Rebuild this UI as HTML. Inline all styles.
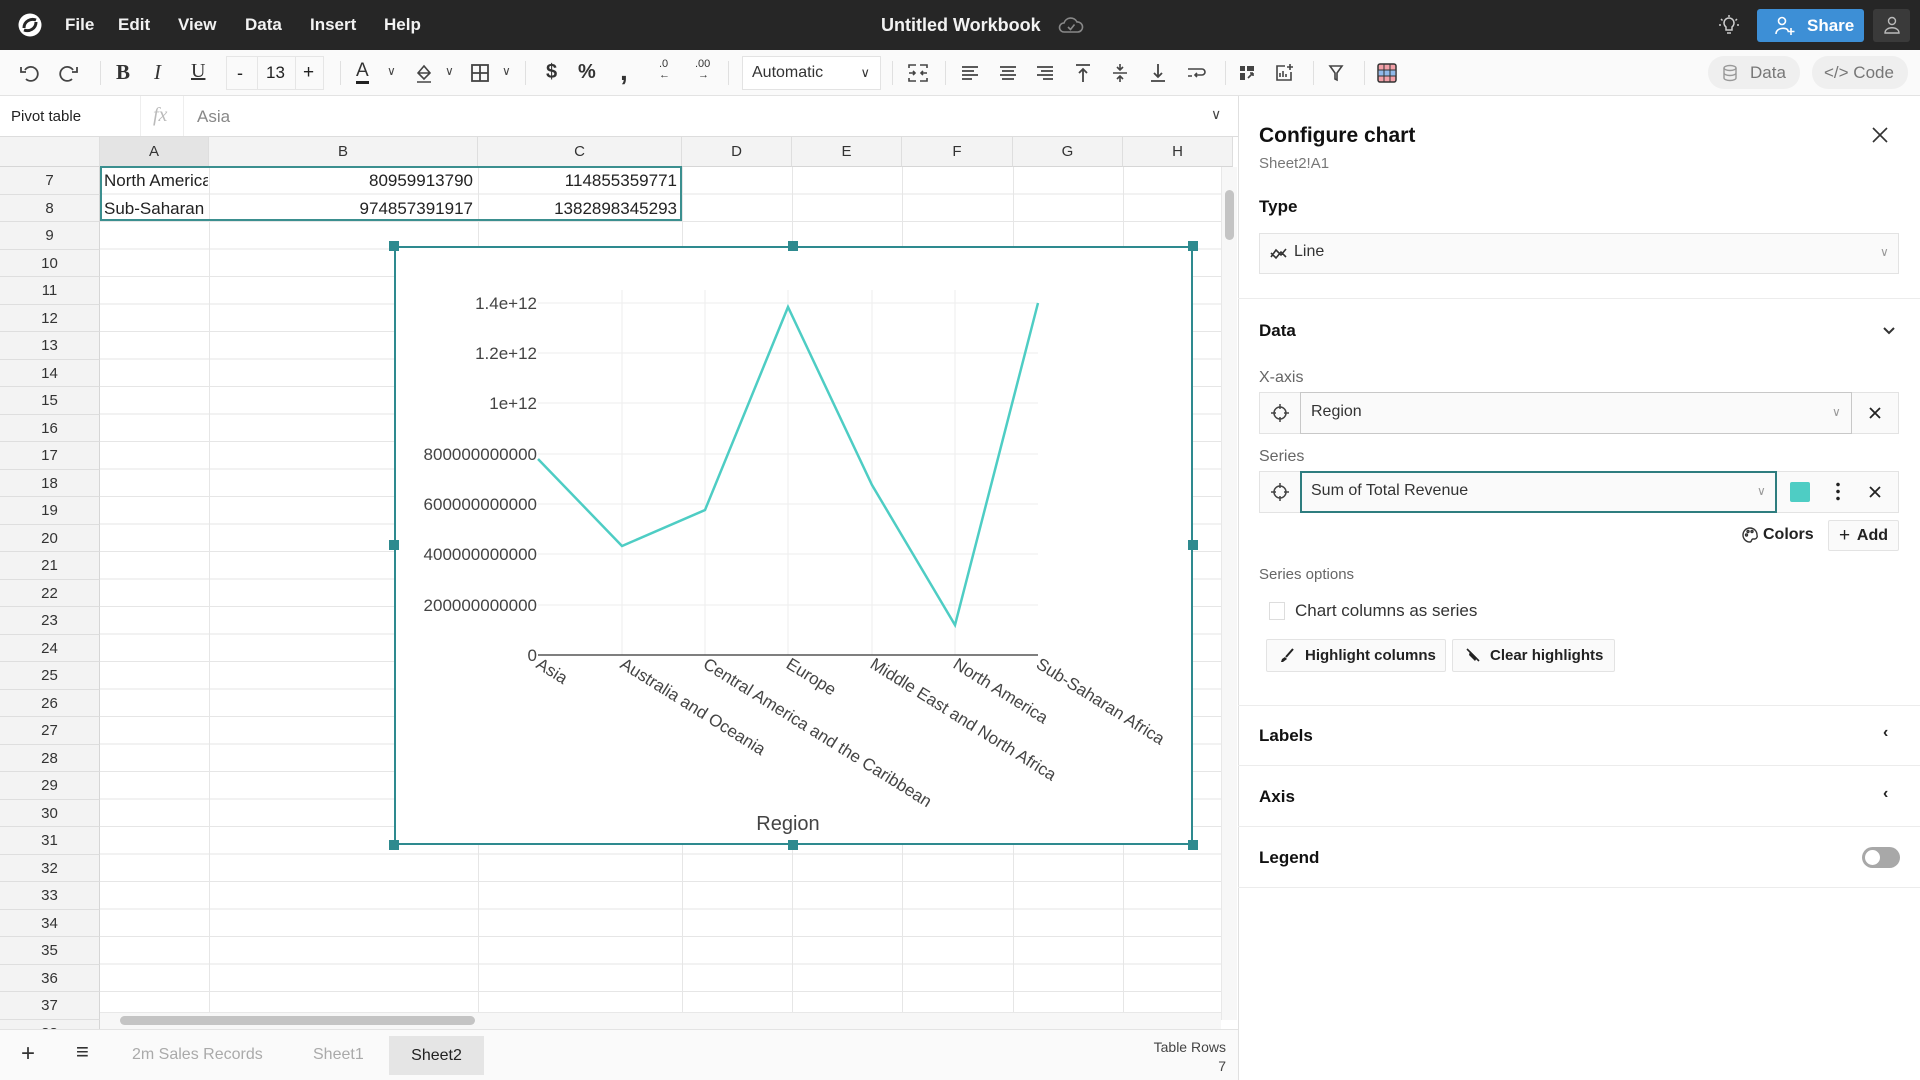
<!DOCTYPE html>
<html><head><meta charset="utf-8">
<style>
*{margin:0;padding:0;box-sizing:border-box}
body{width:1920px;height:1080px;overflow:hidden;background:#fff;font-family:"Liberation Sans",Arial,sans-serif;color:#222;position:relative}
.a{position:absolute}
.top{left:0;top:0;width:1920px;height:50px;background:#262626;color:#fff}
.menu{top:15px;font-size:17px;font-weight:bold;color:#f2f2f2}
.tb{left:0;top:50px;width:1920px;height:46px;background:#fafafa;border-bottom:1px solid #e3e3e3}
.ic{top:11px;width:24px;height:24px}
.sep{top:11px;width:1px;height:24px;background:#e0e0e0}
.fb{left:0;top:96px;width:1238px;height:41px;background:#fff;border-bottom:1px solid #ddd}
.ch{top:137px;height:30px;background:#f3f3f3;border-bottom:1px solid #d6d6d6;border-right:1px solid #dedede;font-size:15px;color:#333;text-align:center;line-height:30px}
.rn{left:0;width:100px;height:27.5px;background:#f3f3f3;border-bottom:1px solid #dedede;border-right:1px solid #d6d6d6;font-size:15px;color:#333;text-align:center;line-height:27.5px}
.vl{top:167px;width:1px;height:853px;background:#e6e6e6}
.hl{left:100px;width:1121px;height:1px;background:#e6e6e6}
.cell{font-size:17px;color:#222;height:27px;line-height:27px}
.pn{left:1238px;top:96px;width:682px;height:984px;background:#fff;border-left:1px solid #e0e0e0}
.h{font-size:17px;font-weight:bold;color:#111}
.lbl{font-size:16px;color:#666}
.psep{left:1238px;width:682px;height:1px;background:#ececec}
.box{border:1px solid #e3e3e3;background:#fafafa}
.btn{border:1px solid #e3e3e3;background:#fafafa;font-size:15px;font-weight:bold;color:#222;border-radius:2px}
</style></head><body>

<!-- top bar -->
<div class="a top">
<svg class="a" style="left:17px;top:12px" width="26" height="26" viewBox="0 0 26 26"><circle cx="13" cy="13" r="11.5" fill="#fff"/><path d="M7 16 C7 9 14 6 19 8 M19 10 C19 17 12 20 7 18" stroke="#262626" stroke-width="3" fill="none"/></svg>
<div class="a menu" style="left:65px">File</div>
<div class="a menu" style="left:118px">Edit</div>
<div class="a menu" style="left:178px">View</div>
<div class="a menu" style="left:245px">Data</div>
<div class="a menu" style="left:310px">Insert</div>
<div class="a menu" style="left:384px">Help</div>
<div class="a menu" style="left:881px;font-size:18px">Untitled Workbook</div>
<svg class="a" style="left:1058px;top:14px" width="26" height="22" viewBox="0 0 26 22"><path d="M6 18 H20 A5 5 0 0 0 19 8 A7 7 0 0 0 6 9 A4.5 4.5 0 0 0 6 18Z" fill="none" stroke="#888" stroke-width="1.6"/><path d="M10 13 l2.5 2.5 l4 -5" fill="none" stroke="#888" stroke-width="1.6"/></svg>
<svg class="a" style="left:1717px;top:13px" width="24" height="24" viewBox="0 0 24 24" fill="none" stroke="#ccc" stroke-width="1.5"><path d="M9 14 A5 5 0 1 1 15 14 V17 H9Z M10 20 H14 M12 2 V4 M4 6 L5.5 7.5 M20 6 L18.5 7.5 M2 12 H4 M20 12 H22"/></svg>
<div class="a" style="left:1757px;top:9px;width:107px;height:33px;background:#3d8fd6;border-radius:3px;color:#fff;font-weight:bold;font-size:17px;line-height:33px;padding-left:50px">Share</div>
<svg class="a" style="left:1774px;top:15px" width="22" height="22" viewBox="0 0 22 22" fill="none" stroke="#fff" stroke-width="1.6"><circle cx="8" cy="6" r="3.5"/><path d="M2 19 C2 12 14 12 14 16 M17 13 V20 M13.5 16.5 H20.5"/></svg>
<div class="a" style="left:1873px;top:9px;width:37px;height:33px;background:#3a3a3a;border-radius:3px"></div>
<svg class="a" style="left:1882px;top:15px" width="20" height="20" viewBox="0 0 20 20" fill="none" stroke="#bbb" stroke-width="1.4"><circle cx="10" cy="6" r="3.5"/><path d="M3 18 C3 11 17 11 17 18Z"/></svg>
</div>

<!-- toolbar -->
<div class="a tb">
<svg class="a ic" style="left:17px" viewBox="0 0 24 24" fill="none" stroke="#444" stroke-width="1.8"><path d="M8 9 A7 7 0 1 1 9 18 M4 6 V11 H9"/></svg>
<svg class="a ic" style="left:57px" viewBox="0 0 24 24" fill="none" stroke="#444" stroke-width="1.8"><path d="M16 9 A7 7 0 1 0 15 18 M20 6 V11 H15"/></svg>
<div class="a sep" style="left:100px"></div>
<div class="a" style="left:116px;top:10px;font-size:21px;font-weight:bold;font-family:'Liberation Serif',serif;color:#333">B</div>
<div class="a" style="left:154px;top:10px;font-size:21px;font-style:italic;font-family:'Liberation Serif',serif;color:#333">I</div>
<div class="a" style="left:191px;top:10px;font-size:20px;text-decoration:underline;font-family:'Liberation Serif',serif;color:#333">U</div>
<div class="a" style="left:226px;top:6px;width:98px;height:34px;border:1px solid #e6e6e6"></div>
<div class="a" style="left:257px;top:6px;width:1px;height:34px;background:#e6e6e6"></div>
<div class="a" style="left:295px;top:6px;width:1px;height:34px;background:#e6e6e6"></div>
<div class="a" style="left:237px;top:13px;font-size:18px">-</div>
<div class="a" style="left:266px;top:13px;font-size:17px">13</div>
<div class="a" style="left:303px;top:12px;font-size:19px">+</div>
<div class="a sep" style="left:340px"></div>
<div class="a" style="left:356px;top:11px;font-size:19px;color:#333;border-bottom:3px solid #222;line-height:20px">A</div>
<div class="a" style="left:387px;top:14px;font-size:12px;color:#444">&#8744;</div>
<svg class="a ic" style="left:412px" viewBox="0 0 24 24" fill="none" stroke="#444" stroke-width="1.6"><path d="M6 12 L12 5 L18 12 L12 18Z M6 12 H18 M5 21 H19"/></svg>
<div class="a" style="left:445px;top:14px;font-size:12px;color:#444">&#8744;</div>
<svg class="a ic" style="left:468px" viewBox="0 0 24 24" fill="none" stroke="#444" stroke-width="1.8"><rect x="4" y="4" width="16" height="16"/><path d="M12 4 V20 M4 12 H20"/></svg>
<div class="a" style="left:502px;top:14px;font-size:12px;color:#444">&#8744;</div>
<div class="a sep" style="left:525px"></div>
<div class="a" style="left:546px;top:11px;font-size:20px;font-weight:bold;color:#333">$</div>
<div class="a" style="left:578px;top:11px;font-size:20px;font-weight:bold;color:#333">%</div>
<div class="a" style="left:620px;top:5px;font-size:28px;font-weight:bold;color:#333">,</div>
<div class="a" style="left:659px;top:9px;font-size:11px;color:#333;line-height:11px">.0<br>&#8592;</div>
<div class="a" style="left:695px;top:9px;font-size:11px;color:#333;line-height:11px">.00<br>&nbsp;&#8594;</div>
<div class="a sep" style="left:728px"></div>
<div class="a" style="left:742px;top:6px;width:139px;height:34px;border:1px solid #e3e3e3;background:#fff;font-size:16px;line-height:32px;padding-left:9px;color:#333">Automatic<span style="position:absolute;right:10px;font-size:13px">&#8744;</span></div>
<div class="a sep" style="left:892px"></div>
<svg class="a ic" style="left:906px" viewBox="0 0 24 24" fill="none" stroke="#444" stroke-width="1.6"><path d="M3 7 V4 H10 M3 17 V20 H10 M21 7 V4 H14 M21 17 V20 H14 M3 12 H9 M7 10 L9 12 L7 14 M21 12 H15 M17 10 L15 12 L17 14"/></svg>
<div class="a sep" style="left:945px"></div>
<svg class="a ic" style="left:958px" viewBox="0 0 24 24" stroke="#444" stroke-width="1.8"><path d="M4 6 H20 M4 10 H16 M4 14 H20 M4 18 H14"/></svg>
<svg class="a ic" style="left:996px" viewBox="0 0 24 24" stroke="#444" stroke-width="1.8"><path d="M4 6 H20 M6 10 H18 M4 14 H20 M6 18 H18"/></svg>
<svg class="a ic" style="left:1033px" viewBox="0 0 24 24" stroke="#444" stroke-width="1.8"><path d="M4 6 H20 M8 10 H20 M4 14 H20 M10 18 H20"/></svg>
<svg class="a ic" style="left:1071px" viewBox="0 0 24 24" fill="none" stroke="#444" stroke-width="1.8"><path d="M5 4 H19 M12 8 V21 M8 12 L12 8 L16 12"/></svg>
<svg class="a ic" style="left:1108px" viewBox="0 0 24 24" fill="none" stroke="#444" stroke-width="1.6"><path d="M5 12 H19 M12 3 V9 M9 6 L12 9 L15 6 M12 21 V15 M9 18 L12 15 L15 18"/></svg>
<svg class="a ic" style="left:1146px" viewBox="0 0 24 24" fill="none" stroke="#444" stroke-width="1.8"><path d="M5 20 H19 M12 3 V16 M8 12 L12 16 L16 12"/></svg>
<svg class="a ic" style="left:1184px" viewBox="0 0 24 24" fill="none" stroke="#444" stroke-width="1.6"><path d="M4 8 H18 A3 3 0 0 1 18 14 H11 M13 12 L11 14 L13 16 M4 15 H8"/></svg>
<div class="a sep" style="left:1225px"></div>
<svg class="a ic" style="left:1235px" viewBox="0 0 24 24" fill="#444"><rect x="5" y="5" width="5" height="5"/><rect x="5" y="12" width="5" height="7"/><path d="M12 5 H19 V10 H12Z" /><path d="M13 17 L18 12 M18 12 V15 M18 12 H15" stroke="#444" stroke-width="1.6" fill="none"/></svg>
<svg class="a ic" style="left:1272px" viewBox="0 0 24 24" fill="none" stroke="#444" stroke-width="1.6"><path d="M13 5 H5 V19 H19 V11 M8 16 V12 M11 16 V10 M14 16 V13 M18 3 V9 M15 6 H21"/></svg>
<div class="a sep" style="left:1313px"></div>
<svg class="a ic" style="left:1324px" viewBox="0 0 24 24" fill="none" stroke="#444" stroke-width="1.6"><path d="M6 5 H18 L13 12 V19 L11 18 V12Z"/></svg>
<div class="a sep" style="left:1364px"></div>
<svg class="a ic" style="left:1375px" viewBox="0 0 24 24"><rect x="3" y="3" width="18" height="18" rx="2" fill="#f2a0a8" stroke="#333" stroke-width="1.5"/><rect x="3.7" y="9" width="16.6" height="6" fill="#8fb8e8"/><path d="M3 9 H21 M3 15 H21 M9 3 V21 M15 3 V21" stroke="#333" stroke-width="1"/></svg>
<div class="a" style="left:1708px;top:6px;width:92px;height:33px;background:#efefef;border-radius:16px;font-size:17px;color:#777;line-height:33px;padding-left:42px">Data</div>
<svg class="a" style="left:1721px;top:14px" width="18" height="18" viewBox="0 0 18 18" fill="none" stroke="#999" stroke-width="1.4"><ellipse cx="9" cy="4" rx="6" ry="2.5"/><path d="M3 4 V14 A6 2.5 0 0 0 15 14 V4 M3 9 A6 2.5 0 0 0 15 9"/></svg>
<div class="a" style="left:1812px;top:6px;width:96px;height:33px;background:#efefef;border-radius:16px;font-size:17px;color:#777;line-height:33px;padding-left:12px">&lt;/&gt; Code</div>
</div>

<!-- formula bar -->
<div class="a fb">
<div class="a" style="left:11px;top:12px;font-size:15px;color:#222">Pivot table</div>
<div class="a" style="left:140px;top:0;width:1px;height:40px;background:#eee"></div>
<div class="a" style="left:153px;top:8px;font-size:20px;font-style:italic;color:#bbb;font-family:'Liberation Serif',serif">fx</div>
<div class="a" style="left:183px;top:0;width:1px;height:40px;background:#eee"></div>
<div class="a" style="left:197px;top:11px;font-size:17px;color:#888">Asia</div>
<div class="a" style="left:1211px;top:10px;font-size:14px;color:#444">&#8744;</div>
</div>

<!-- column headers -->
<div class="a ch" style="left:0;width:100px"></div>
<div class="a ch" style="left:100px;width:109px;background:#e4e4e4">A</div>
<div class="a ch" style="left:209px;width:269px">B</div>
<div class="a ch" style="left:478px;width:204px">C</div>
<div class="a ch" style="left:682px;width:110px">D</div>
<div class="a ch" style="left:792px;width:110px">E</div>
<div class="a ch" style="left:902px;width:111px">F</div>
<div class="a ch" style="left:1013px;width:110px">G</div>
<div class="a ch" style="left:1123px;width:110px">H</div>

<!-- grid lines -->
<div class="a vl" style="left:209px"></div><div class="a vl" style="left:478px"></div><div class="a vl" style="left:682px"></div><div class="a vl" style="left:792px"></div><div class="a vl" style="left:902px"></div><div class="a vl" style="left:1013px"></div><div class="a vl" style="left:1123px"></div>
<div class="a" style="left:100px;top:167px;width:1121px;height:853px;background:repeating-linear-gradient(to bottom,transparent 0,transparent 26.5px,#e6e6e6 26.5px,#e6e6e6 27.5px)"></div>

<!-- row numbers -->
<div class="a" style="left:0;top:167px">
<div class="rn a" style="top:0">7</div><div class="rn a" style="top:27.5px">8</div><div class="rn a" style="top:55px">9</div><div class="rn a" style="top:82.5px">10</div><div class="rn a" style="top:110px">11</div><div class="rn a" style="top:137.5px">12</div><div class="rn a" style="top:165px">13</div><div class="rn a" style="top:192.5px">14</div><div class="rn a" style="top:220px">15</div><div class="rn a" style="top:247.5px">16</div><div class="rn a" style="top:275px">17</div><div class="rn a" style="top:302.5px">18</div><div class="rn a" style="top:330px">19</div><div class="rn a" style="top:357.5px">20</div><div class="rn a" style="top:385px">21</div><div class="rn a" style="top:412.5px">22</div><div class="rn a" style="top:440px">23</div><div class="rn a" style="top:467.5px">24</div><div class="rn a" style="top:495px">25</div><div class="rn a" style="top:522.5px">26</div><div class="rn a" style="top:550px">27</div><div class="rn a" style="top:577.5px">28</div><div class="rn a" style="top:605px">29</div><div class="rn a" style="top:632.5px">30</div><div class="rn a" style="top:660px">31</div><div class="rn a" style="top:687.5px">32</div><div class="rn a" style="top:715px">33</div><div class="rn a" style="top:742.5px">34</div><div class="rn a" style="top:770px">35</div><div class="rn a" style="top:797.5px">36</div><div class="rn a" style="top:825px">37</div><div class="rn a" style="top:852.5px">38</div>
</div>

<!-- cells -->
<div class="a cell" style="left:104px;top:167px;width:104px;overflow:hidden;white-space:nowrap">North America</div>
<div class="a cell" style="left:104px;top:194.5px">Sub-Saharan</div>
<div class="a cell" style="left:209px;top:167px;width:264px;text-align:right">80959913790</div>
<div class="a cell" style="left:209px;top:194.5px;width:264px;text-align:right">974857391917</div>
<div class="a cell" style="left:478px;top:167px;width:199px;text-align:right">114855359771</div>
<div class="a cell" style="left:478px;top:194.5px;width:199px;text-align:right">1382898345293</div>
<div class="a" style="left:100px;top:166px;width:582px;height:55px;border:2px solid #3b8f8f"></div>

<!-- scrollbars -->
<div class="a" style="left:1221px;top:167px;width:16px;height:853px;background:#f7f7f7;border-left:1px solid #e8e8e8"></div>
<div class="a" style="left:1225px;top:190px;width:9px;height:50px;background:#c4c4c4;border-radius:5px"></div>
<div class="a" style="left:100px;top:1012px;width:1121px;height:17px;background:#f7f7f7;border-top:1px solid #e8e8e8"></div>
<div class="a" style="left:120px;top:1016px;width:355px;height:9px;background:#c4c4c4;border-radius:5px"></div>

<!-- bottom bar -->
<div class="a" style="left:0;top:1029px;width:1238px;height:51px;background:#fafafa;border-top:1px solid #e3e3e3">
<div class="a" style="left:21px;top:10px;font-size:24px;color:#333">+</div>
<div class="a" style="left:76px;top:9px;font-size:22px;color:#333">&#8801;</div>
<div class="a" style="left:132px;top:16px;font-size:16px;color:#aaa">2m Sales Records</div>
<div class="a" style="left:313px;top:16px;font-size:16px;color:#aaa">Sheet1</div>
<div class="a" style="left:389px;top:6px;width:95px;height:39px;background:#e5e5e5;font-size:16px;color:#222;text-align:center;line-height:39px">Sheet2</div>
<div class="a" style="right:12px;top:8px;font-size:14px;color:#444;text-align:right;line-height:19px">Table Rows<br>7</div>
</div>

<!-- chart -->
<div class="a" style="left:394px;top:246px;width:799px;height:599px;background:#fff;border:2px solid #2e8a8f">
<svg class="a" style="left:-2px;top:-2px" width="799" height="599" viewBox="394 246 799 599" overflow="visible">
<g stroke="#eee" stroke-width="1">
<line x1="538" y1="303" x2="1038" y2="303"/><line x1="538" y1="353" x2="1038" y2="353"/><line x1="538" y1="403" x2="1038" y2="403"/><line x1="538" y1="454" x2="1038" y2="454"/><line x1="538" y1="504" x2="1038" y2="504"/><line x1="538" y1="554" x2="1038" y2="554"/><line x1="538" y1="605" x2="1038" y2="605"/>
<line x1="622" y1="290" x2="622" y2="655"/><line x1="705" y1="290" x2="705" y2="655"/><line x1="788" y1="290" x2="788" y2="655"/><line x1="872" y1="290" x2="872" y2="655"/><line x1="955" y1="290" x2="955" y2="655"/>
</g>
<line x1="538" y1="655" x2="1038" y2="655" stroke="#333" stroke-width="1.2"/>
<polyline points="538,459 622,546 705,510 788,307 872,485 955,625 1038,303" fill="none" stroke="#4ecdc4" stroke-width="2.5"/>
<g font-family="Liberation Sans,Arial,sans-serif" font-size="17" fill="#444" text-anchor="end">
<text x="537" y="309">1.4e+12</text><text x="537" y="359">1.2e+12</text><text x="537" y="409">1e+12</text><text x="537" y="460">800000000000</text><text x="537" y="510">600000000000</text><text x="537" y="560">400000000000</text><text x="537" y="611">200000000000</text><text x="537" y="661">0</text>
</g>
<g font-family="Liberation Sans,Arial,sans-serif" font-size="17" fill="#444">
<text transform="translate(535,667) rotate(32)">Asia</text>
<text transform="translate(619,667) rotate(32)">Australia and Oceania</text>
<text transform="translate(702,667) rotate(32)">Central America and the Caribbean</text>
<text transform="translate(785,667) rotate(32)">Europe</text>
<text transform="translate(869,667) rotate(32)">Middle East and North Africa</text>
<text transform="translate(952,667) rotate(32)">North America</text>
<text transform="translate(1035,667) rotate(32)">Sub-Saharan Africa</text>
<text x="788" y="830" text-anchor="middle" font-size="20">Region</text>
</g>
<g fill="#2e8a8f"><rect x="389" y="241" width="10" height="10"/><rect x="788" y="241" width="10" height="10"/><rect x="1188" y="241" width="10" height="10"/><rect x="389" y="540" width="10" height="10"/><rect x="1188" y="540" width="10" height="10"/><rect x="389" y="840" width="10" height="10"/><rect x="788" y="840" width="10" height="10"/><rect x="1188" y="840" width="10" height="10"/></g>
</svg>
</div>

<!-- panel -->
<div class="a pn"></div>
<div class="a" style="left:1259px;top:124px;font-size:21px;font-weight:bold;color:#111">Configure chart</div>
<div class="a" style="left:1259px;top:155px;font-size:15px;color:#777">Sheet2!A1</div>
<svg class="a" style="left:1871px;top:126px" width="18" height="18" viewBox="0 0 18 18" stroke="#333" stroke-width="1.6"><path d="M2 2 L16 16 M16 2 L2 16"/></svg>
<div class="a h" style="left:1259px;top:197px">Type</div>
<div class="a box" style="left:1259px;top:233px;width:640px;height:41px"></div>
<svg class="a" style="left:1270px;top:245px" width="18" height="16" viewBox="0 0 18 16" fill="none" stroke="#333" stroke-width="1.6"><path d="M1 12 L6 5 L11 10 L16 4 M1 8 L6 13 L11 7 L16 12"/></svg>
<div class="a" style="left:1294px;top:243px;font-size:16px;color:#333">Line</div>
<div class="a" style="left:1880px;top:245px;font-size:12px;color:#999">&#8744;</div>
<div class="a psep" style="top:298px"></div>
<div class="a h" style="left:1259px;top:321px">Data</div>
<svg class="a" style="left:1882px;top:326px" width="14" height="10" viewBox="0 0 14 10" fill="none" stroke="#333" stroke-width="2"><path d="M2 2 L7 7 L12 2"/></svg>
<div class="a lbl" style="left:1259px;top:369px">X-axis</div>
<div class="a box" style="left:1259px;top:392px;width:640px;height:42px"></div>
<div class="a" style="left:1300px;top:392px;width:552px;height:42px;background:#fafafa;border:1px solid #c8c8c8"></div>
<svg class="a" style="left:1270px;top:403px" width="20" height="20" viewBox="0 0 20 20" fill="none" stroke="#444" stroke-width="1.5"><circle cx="10" cy="10" r="6"/><path d="M10 1 V6 M10 14 V19 M1 10 H6 M14 10 H19"/></svg>
<div class="a" style="left:1311px;top:403px;font-size:16px;color:#333">Region</div>
<div class="a" style="left:1832px;top:405px;font-size:12px;color:#999">&#8744;</div>
<svg class="a" style="left:1868px;top:406px" width="14" height="14" viewBox="0 0 14 14" stroke="#222" stroke-width="1.8"><path d="M2 2 L12 12 M12 2 L2 12"/></svg>
<div class="a lbl" style="left:1259px;top:448px">Series</div>
<div class="a box" style="left:1259px;top:471px;width:640px;height:42px"></div>
<div class="a" style="left:1300px;top:471px;width:477px;height:42px;background:#fafafa;border:2px solid #2e7d7f"></div>
<svg class="a" style="left:1270px;top:482px" width="20" height="20" viewBox="0 0 20 20" fill="none" stroke="#444" stroke-width="1.5"><circle cx="10" cy="10" r="6"/><path d="M10 1 V6 M10 14 V19 M1 10 H6 M14 10 H19"/></svg>
<div class="a" style="left:1311px;top:482px;font-size:16px;color:#333">Sum of Total Revenue</div>
<div class="a" style="left:1757px;top:484px;font-size:12px;color:#999">&#8744;</div>
<div class="a" style="left:1790px;top:482px;width:20px;height:20px;background:#4ecdc4;border-radius:2px"></div>
<div class="a" style="left:1836px;top:481px;width:4px;height:20px;background:radial-gradient(circle,#222 1.6px,transparent 2px) 0 0/4px 7px"></div>
<svg class="a" style="left:1868px;top:485px" width="14" height="14" viewBox="0 0 14 14" stroke="#222" stroke-width="1.8"><path d="M2 2 L12 12 M12 2 L2 12"/></svg>
<svg class="a" style="left:1741px;top:526px" width="18" height="18" viewBox="0 0 18 18" fill="none" stroke="#333" stroke-width="1.4"><path d="M9 2 A7 7 0 1 0 9 16 C11 16 10 13 12 13 H14 A3 3 0 0 0 16 9 A7 7 0 0 0 9 2Z"/><circle cx="5.5" cy="9" r="1"/><circle cx="7" cy="5.5" r="1"/><circle cx="11" cy="5.5" r="1"/></svg>
<div class="a" style="left:1763px;top:526px;font-size:16px;font-weight:bold">Colors</div>
<div class="a btn" style="left:1828px;top:520px;width:71px;height:31px;line-height:29px;text-align:right;padding-right:10px;font-size:16px"><span style="position:absolute;left:10px;font-weight:normal;font-size:19px">+</span>Add</div>
<div class="a lbl" style="left:1259px;top:566px;font-size:15px">Series options</div>
<div class="a" style="left:1269px;top:602px;width:16px;height:18px;border:1px solid #ddd;background:#fff"></div>
<div class="a" style="left:1295px;top:601px;font-size:17px;color:#333">Chart columns as series</div>
<div class="a btn" style="left:1266px;top:639px;width:180px;height:33px;line-height:31px;padding-left:38px">Highlight columns</div>
<svg class="a" style="left:1279px;top:647px" width="16" height="16" viewBox="0 0 16 16"><path d="M14 2 L7 10" stroke="#222" stroke-width="2"/><path d="M6 10 L8 12 L4 15 L2 15 L3 12Z" fill="#222"/></svg>
<div class="a btn" style="left:1452px;top:639px;width:163px;height:33px;line-height:31px;padding-left:37px">Clear highlights</div>
<svg class="a" style="left:1465px;top:647px" width="16" height="16" viewBox="0 0 16 16"><path d="M5 4 L12 11 L10 14 L4 8Z" fill="#222"/><path d="M2 2 L14 14" stroke="#222" stroke-width="1.6"/></svg>
<div class="a psep" style="top:705px"></div>
<div class="a h" style="left:1259px;top:726px">Labels</div>
<div class="a" style="left:1883px;top:724px;font-size:16px;font-weight:bold">&#8249;</div>
<div class="a psep" style="top:765px"></div>
<div class="a h" style="left:1259px;top:787px">Axis</div>
<div class="a" style="left:1883px;top:785px;font-size:16px;font-weight:bold">&#8249;</div>
<div class="a psep" style="top:826px"></div>
<div class="a h" style="left:1259px;top:848px">Legend</div>
<div class="a" style="left:1862px;top:847px;width:38px;height:21px;background:#a8a8a8;border-radius:11px"><div class="a" style="left:3px;top:3px;width:15px;height:15px;background:#fff;border-radius:50%"></div></div>
<div class="a psep" style="top:887px"></div>
</body></html>
